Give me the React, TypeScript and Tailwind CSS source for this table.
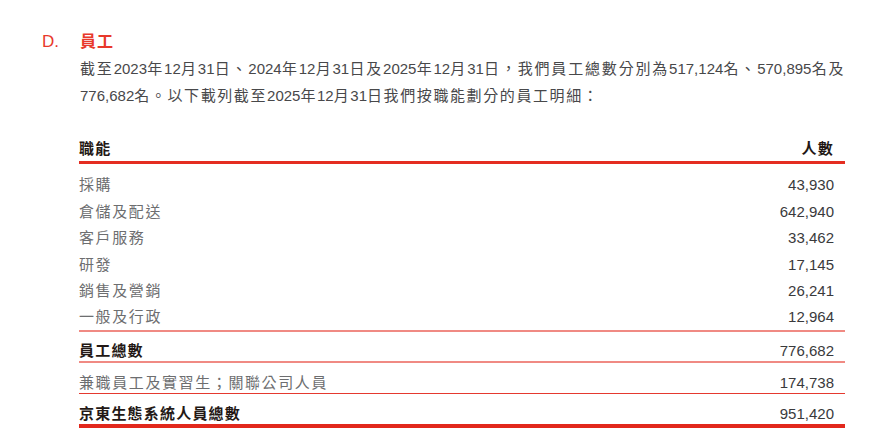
import React from "react";

const CJK = /([\u2E80-\u9FFF\u3000-\u303F\uFF00-\uFFEF]+)/;
const CJK_TEST = /[\u2E80-\u9FFF\u3000-\u303F\uFF00-\uFFEF]/;

function T({ s, t = "n" }: { s: string; t?: "n" | "s" }) {
  const parts = s.split(CJK);
  return (
    <>
      {parts.map((p, i) =>
        CJK_TEST.test(p) ? (
          <span key={i} className={t === "n" ? "tracking-[1.6px]" : "tracking-[1.2px]"}>
            {p}
          </span>
        ) : (
          <React.Fragment key={i}>{p}</React.Fragment>
        )
      )}
    </>
  );
}

const rows: [string, string][] = [
  ["採購", "43,930"],
  ["倉儲及配送", "642,940"],
  ["客戶服務", "33,462"],
  ["研發", "17,145"],
  ["銷售及營銷", "26,241"],
  ["一般及行政", "12,964"],
];

export default function App() {
  return (
    <div className="w-[888px] h-[435px] bg-white overflow-hidden font-['Liberation_Sans','Noto_Sans_CJK_TC',sans-serif] text-[15px]">
      <div className="pt-[30px] pl-[42px]">
        <div className="flex h-[24px] items-center leading-[24px]">
          <span className="w-[38px] text-[17px] text-[#e8392b]">D.</span>
          <span className="text-[16px] font-bold text-[#e8392b] tracking-[1px]">員工</span>
        </div>
      </div>
      <div className="ml-[80px] mr-[43px] mt-[1px]">
        <p className="leading-[27px] text-[#48484a] text-justify">
          <T s="截至2023年12月31日、2024年12月31日及2025年12月31日，我們員工總數分別為517,124名、570,895名及776,682名。以下載列截至2025年12月31日我們按職能劃分的員工明細：" />
        </p>
      </div>
      <div className="ml-[79px] w-[766px] mt-[26px]">
        <div className="flex h-[29px] items-center pt-[2px] justify-between border-b-[3px] border-b-[#e42d21] font-bold text-[#231815]">
          <span><T s="職能" t="s" /></span>
          <span className="pr-[11px]"><T s="人數" t="s" /></span>
        </div>
        <div className="pt-[8px] border-b-2 border-b-[#f08a83]">
          {rows.map(([l, v], i) => (
            <div
              key={l}
              className={
                "flex items-center justify-between leading-[20px] " +
                (i === rows.length - 1 ? "h-[25.5px]" : "h-[26.5px]")
              }
            >
              <span className="text-[#6d6e70]"><T s={l} /></span>
              <span className="pr-[11px] text-[#3a3a3c]">{v}</span>
            </div>
          ))}
        </div>
        <div className="flex h-[31px] pt-[8px] items-center justify-between border-b-2 border-b-[#f08a83] leading-[20px]">
          <span className="font-bold text-[#231815]"><T s="員工總數" t="s" /></span>
          <span className="pr-[11px] text-[#3a3a3c]">776,682</span>
        </div>
        <div className="flex h-[31px] pt-[10px] items-center justify-between border-b border-b-[#e5392f] leading-[20px]">
          <span className="text-[#6d6e70]"><T s="兼職員工及實習生；關聯公司人員" /></span>
          <span className="pr-[11px] text-[#3a3a3c]">174,738</span>
        </div>
        <div className="flex h-[34px] pt-[10px] items-center justify-between border-b-4 border-b-[#e2281c] leading-[20px]">
          <span className="font-bold text-[#231815]"><T s="京東生態系統人員總數" t="s" /></span>
          <span className="pr-[11px] text-[#3a3a3c]">951,420</span>
        </div>
      </div>
    </div>
  );
}
